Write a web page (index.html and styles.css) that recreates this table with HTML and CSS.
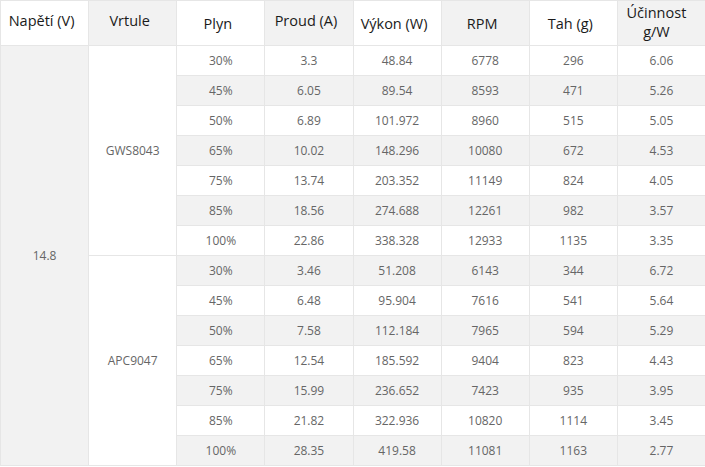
FILE: index.html
```html
<!DOCTYPE html>
<html lang="cs">
<head>
<meta charset="utf-8">
<title>Tabulka</title>
<link rel="stylesheet" href="styles.css">
</head>
<body>
<table class="data">
<colgroup>
<col class="c"><col class="c"><col class="c"><col class="c"><col class="c"><col class="c"><col class="c"><col class="c">
</colgroup>
<thead>
<tr>
<th>Napětí (V)</th><th class="alt">Vrtule</th><th class="low">Plyn</th><th class="alt">Proud (A)</th><th class="low">Výkon (W)</th><th class="alt low">RPM</th><th class="low">Tah (g)</th><th class="alt top">Účinnost g/W</th>
</tr>
</thead>
<tbody>
<tr><td class="volt" rowspan="14">14.8</td><td class="prop" rowspan="7">GWS8043</td><td>30%</td><td>3.3</td><td>48.84</td><td>6778</td><td>296</td><td>6.06</td></tr>
<tr class="g"><td>45%</td><td>6.05</td><td>89.54</td><td>8593</td><td>471</td><td>5.26</td></tr>
<tr><td>50%</td><td>6.89</td><td>101.972</td><td>8960</td><td>515</td><td>5.05</td></tr>
<tr class="g"><td>65%</td><td>10.02</td><td>148.296</td><td>10080</td><td>672</td><td>4.53</td></tr>
<tr><td>75%</td><td>13.74</td><td>203.352</td><td>11149</td><td>824</td><td>4.05</td></tr>
<tr class="g"><td>85%</td><td>18.56</td><td>274.688</td><td>12261</td><td>982</td><td>3.57</td></tr>
<tr><td>100%</td><td>22.86</td><td>338.328</td><td>12933</td><td>1135</td><td>3.35</td></tr>
<tr class="g"><td class="prop" rowspan="7">APC9047</td><td>30%</td><td>3.46</td><td>51.208</td><td>6143</td><td>344</td><td>6.72</td></tr>
<tr><td>45%</td><td>6.48</td><td>95.904</td><td>7616</td><td>541</td><td>5.64</td></tr>
<tr class="g"><td>50%</td><td>7.58</td><td>112.184</td><td>7965</td><td>594</td><td>5.29</td></tr>
<tr><td>65%</td><td>12.54</td><td>185.592</td><td>9404</td><td>823</td><td>4.43</td></tr>
<tr class="g"><td>75%</td><td>15.99</td><td>236.652</td><td>7423</td><td>935</td><td>3.95</td></tr>
<tr><td>85%</td><td>21.82</td><td>322.936</td><td>10820</td><td>1114</td><td>3.45</td></tr>
<tr class="g"><td>100%</td><td>28.35</td><td>419.58</td><td>11081</td><td>1163</td><td>2.77</td></tr>
</tbody>
</table>
</body>
</html>
```
FILE: styles.css
```css
html, body {
  margin: 0;
  padding: 0;
  background: #fff;
}
.data {
  border-collapse: collapse;
  table-layout: fixed;
  width: 706px;
  font-family: "Open Sans", "Noto Sans", sans-serif;
}
.data .c {
  width: 88px;
}
.data th {
  box-sizing: border-box;
  height: 45px;
  padding: 0 8px 6px 2px;
  font-size: 14.5px;
  font-weight: normal;
  color: #1a1a1a;
  text-align: center;
  vertical-align: middle;
  border: 1px solid #e6e6e6;
  background: #fff;
  line-height: 19px;
}
.data th.alt {
  background: #f2f2f2;
}
.data th.low {
  padding: 2px 8px 2px 2px;
}
.data th.top {
  padding: 0 12px 2px 2px;
  line-height: 19px;
}
.data td {
  height: 29px;
  padding: 0 4px;
  font-size: 12px;
  color: #666;
  text-align: center;
  vertical-align: middle;
  border: 1px solid #e6e6e6;
  background: #fff;
}
.data tr.g td {
  background: #f2f2f2;
}
.data td.volt,
.data tr.g td.volt {
  background: #f2f2f2;
}
.data td.prop,
.data tr.g td.prop {
  background: #fff;
}
```
